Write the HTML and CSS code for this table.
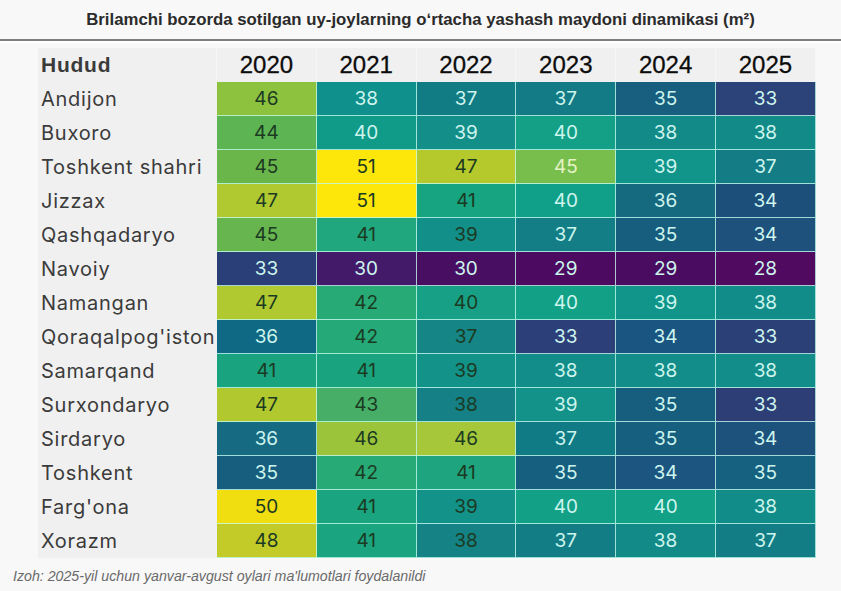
FILE: index.html
```html
<!DOCTYPE html>
<html lang="uz">
<head>
<meta charset="utf-8">
<title>Uy-joy maydoni dinamikasi</title>
<link rel="stylesheet" href="styles.css">
</head>
<body>
<header class="title">Brilamchi bozorda sotilgan uy-joylarning oʻrtacha yashash maydoni dinamikasi (m²)</header>
<div class="rule"></div>
<main class="table">
  <div class="hcell name">Hudud</div>
  <div class="hcell">2020</div><div class="hcell">2021</div><div class="hcell">2022</div><div class="hcell">2023</div><div class="hcell">2024</div><div class="hcell">2025</div>

  <div class="name">Andijon</div>
  <div class="c dk" style="background:#8dc23f">46</div><div class="c" style="background:#10908c">38</div><div class="c" style="background:#127c85">37</div><div class="c" style="background:#137b85">37</div><div class="c" style="background:#185e7e">35</div><div class="c" style="background:#2b4378">33</div>

  <div class="name">Buxoro</div>
  <div class="c dk" style="background:#5db452">44</div><div class="c" style="background:#109a88">40</div><div class="c" style="background:#138e89">39</div><div class="c" style="background:#13a087">40</div><div class="c" style="background:#128a88">38</div><div class="c" style="background:#128a88">38</div>

  <div class="name">Toshkent shahri</div>
  <div class="c dk" style="background:#6ab64b">45</div><div class="c dk" style="background:#fde60a">51</div><div class="c dk" style="background:#b5c92c">47</div><div class="c pale" style="background:#78be4c">45</div><div class="c" style="background:#11948a">39</div><div class="c" style="background:#137c85">37</div>

  <div class="name">Jizzax</div>
  <div class="c dk" style="background:#b0c931">47</div><div class="c dk" style="background:#fde60a">51</div><div class="c dk" style="background:#17a481">41</div><div class="c" style="background:#10a089">40</div><div class="c" style="background:#166a80">36</div><div class="c" style="background:#1d4f7b">34</div>

  <div class="name">Qashqadaryo</div>
  <div class="c dk" style="background:#67b54e">45</div><div class="c dk" style="background:#20a77d">41</div><div class="c dk" style="background:#138f8a">39</div><div class="c" style="background:#137e86">37</div><div class="c" style="background:#175d7e">35</div><div class="c" style="background:#1e527c">34</div>

  <div class="name">Navoiy</div>
  <div class="c" style="background:#2a3f77">33</div><div class="c" style="background:#43196a">30</div><div class="c" style="background:#480e61">30</div><div class="c" style="background:#4c0a60">29</div><div class="c" style="background:#4a0c60">29</div><div class="c" style="background:#500a5f">28</div>

  <div class="name">Namangan</div>
  <div class="c dk" style="background:#b0c931">47</div><div class="c dk" style="background:#27aa76">42</div><div class="c dk" style="background:#17a085">40</div><div class="c" style="background:#12a086">40</div><div class="c" style="background:#11958a">39</div><div class="c" style="background:#128c88">38</div>

  <div class="name">Qoraqalpog'iston</div>
  <div class="c" style="background:#0f6884">36</div><div class="c dk" style="background:#25a978">42</div><div class="c dk" style="background:#158586">37</div><div class="c" style="background:#2d3f79">33</div><div class="c" style="background:#1a5480">34</div><div class="c" style="background:#2c4078">33</div>

  <div class="name">Samarqand</div>
  <div class="c dk" style="background:#19a47f">41</div><div class="c dk" style="background:#19a47f">41</div><div class="c dk" style="background:#13928a">39</div><div class="c" style="background:#128d89">38</div><div class="c" style="background:#128d89">38</div><div class="c" style="background:#128d89">38</div>

  <div class="name">Surxondaryo</div>
  <div class="c dk" style="background:#b1c92f">47</div><div class="c dk" style="background:#46ae66">43</div><div class="c dk" style="background:#158186">38</div><div class="c" style="background:#13928a">39</div><div class="c" style="background:#175e7e">35</div><div class="c" style="background:#2d3e77">33</div>

  <div class="name">Sirdaryo</div>
  <div class="c" style="background:#166a82">36</div><div class="c dk" style="background:#9cc43b">46</div><div class="c dk" style="background:#a5c739">46</div><div class="c" style="background:#117b85">37</div><div class="c" style="background:#175f7e">35</div><div class="c" style="background:#1d527c">34</div>

  <div class="name">Toshkent</div>
  <div class="c" style="background:#175e7e">35</div><div class="c dk" style="background:#27aa76">42</div><div class="c dk" style="background:#1ea47e">41</div><div class="c" style="background:#175f7f">35</div><div class="c" style="background:#1c5680">34</div><div class="c" style="background:#166080">35</div>

  <div class="name">Farg'ona</div>
  <div class="c dk" style="background:#f1de10">50</div><div class="c dk" style="background:#1aa47f">41</div><div class="c dk" style="background:#13928a">39</div><div class="c" style="background:#12a087">40</div><div class="c" style="background:#12a087">40</div><div class="c" style="background:#128c88">38</div>

  <div class="name">Xorazm</div>
  <div class="c dk" style="background:#c3cb28">48</div><div class="c dk" style="background:#1aa47f">41</div><div class="c dk" style="background:#158386">38</div><div class="c" style="background:#137d85">37</div><div class="c" style="background:#128b88">38</div><div class="c" style="background:#137d85">37</div>
</main>
<footer class="note">Izoh: 2025-yil uchun yanvar-avgust oylari ma'lumotlari foydalanildi</footer>
</body>
</html>
```
FILE: styles.css
```css
html, body {
  margin: 0;
  padding: 0;
}
body {
  background: #f8f8f8;
  width: 841px;
  height: 591px;
  overflow: hidden;
  font-family: "Inter", "Liberation Sans", sans-serif;
}
.title {
  height: 39px;
  display: flex;
  align-items: center;
  justify-content: center;
  font-family: "Liberation Sans", sans-serif;
  font-weight: bold;
  font-size: 16.8px;
  color: #2b2b2b;
}
.rule {
  height: 2px;
  background: #7d7d7d;
  border-bottom: 2px solid #ffffff;
}
.table {
  margin: 5px 0 0 38px;
  width: 778px;
  display: grid;
  grid-template-columns: 179px repeat(6, 99.8px);
  grid-auto-rows: 34px;
  background: #f0f0f0;
}
.hcell {
  display: flex;
  align-items: center;
  justify-content: center;
  font-family: "Liberation Sans", sans-serif;
  font-size: 24px;
  color: #0c0c0c;
  -webkit-text-stroke: 0.3px #0c0c0c;
  border-right: 1px solid #f6f6f6;
}
.hcell.name {
  justify-content: flex-start;
  font-weight: bold;
  font-size: 21px;
  -webkit-text-stroke: 0;
  padding-left: 3px;
}
.name {
  display: flex;
  align-items: center;
  padding-left: 3px;
  font-size: 20px;
  letter-spacing: 0.75px;
  color: #3b3b3b;
}
.c {
  display: flex;
  align-items: center;
  justify-content: center;
  font-size: 19px;
  color: #cdf5ee;
  border-right: 1px solid rgba(195, 250, 238, 0.8);
  border-bottom: 1px solid rgba(195, 250, 238, 0.8);
}
.c.dk {
  color: #1b3a22;
}
.c.pale {
  color: #e6f3c4;
}
.note {
  margin: 10px 0 0 13px;
  font-family: "Liberation Sans", sans-serif;
  font-style: italic;
  font-size: 14.2px;
  color: #6a6a6a;
}
```
